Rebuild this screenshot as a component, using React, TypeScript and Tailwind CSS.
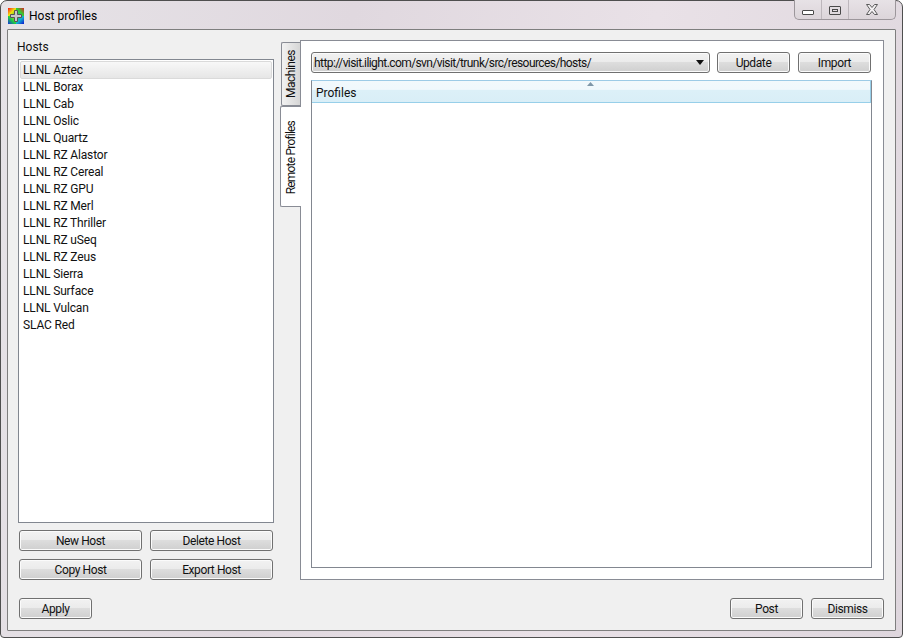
const hosts = ["LLNL Aztec","LLNL Borax","LLNL Cab","LLNL Oslic","LLNL Quartz","LLNL RZ Alastor","LLNL RZ Cereal","LLNL RZ GPU","LLNL RZ Merl","LLNL RZ Thriller","LLNL RZ uSeq","LLNL RZ Zeus","LLNL Sierra","LLNL Surface","LLNL Vulcan","SLAC Red"];

function Btn({ label, w }: { label: string; w: string }) {
  return (
    <button className={`${w} h-[21px] shrink-0 rounded-[3px] border border-[#707070] bg-[linear-gradient(#f2f2f2_0%,#ebebeb_48%,#dddddd_50%,#cfcfcf_100%)] text-[12px] leading-[18px] tracking-[-0.4px] text-[#111] shadow-[inset_0_0_0_1px_#fbfbfb]`}>
      {label}
    </button>
  );
}

function Logo() {
  return (
    <svg width="16" height="16" viewBox="0 0 16 16" className="shrink-0">
      <defs>
        <linearGradient id="q1" x1="0" y1="0" x2="1" y2="1">
          <stop offset="0" stopColor="#ff1010" />
          <stop offset="0.5" stopColor="#f0e010" />
          <stop offset="1" stopColor="#10d020" />
        </linearGradient>
        <linearGradient id="q2" x1="0" y1="1" x2="1" y2="0">
          <stop offset="0" stopColor="#20c0a0" />
          <stop offset="0.5" stopColor="#30d030" />
          <stop offset="1" stopColor="#e02020" />
        </linearGradient>
        <linearGradient id="q3" x1="1" y1="0" x2="0" y2="1">
          <stop offset="0" stopColor="#f0e010" />
          <stop offset="0.5" stopColor="#20d040" />
          <stop offset="1" stopColor="#1030e0" />
        </linearGradient>
        <linearGradient id="q4" x1="0" y1="0" x2="1" y2="1">
          <stop offset="0" stopColor="#20d040" />
          <stop offset="0.5" stopColor="#10b0d0" />
          <stop offset="1" stopColor="#1010d0" />
        </linearGradient>
      </defs>
      <rect x="0" y="0" width="8" height="8" fill="url(#q1)" />
      <rect x="8" y="0" width="8" height="8" fill="url(#q2)" />
      <rect x="0" y="8" width="8" height="8" fill="url(#q3)" />
      <rect x="8" y="8" width="8" height="8" fill="url(#q4)" />
      <path d="M6.500 2.500h3v4h4v3h-4v4h-3v-4h-4v-3h4z" fill="#c8c8c8" stroke="#555" strokeWidth="1" />
    </svg>
  );
}

export default function App() {
  return (
    <div className="w-[903px] h-[638px] overflow-hidden bg-white font-['Roboto',sans-serif] text-[12px] text-[#111]">
      <div className="w-full h-full flex flex-col rounded-t-[7px] rounded-b-[4px] border border-[#4f4f4f] bg-[linear-gradient(100deg,#e6e3e7_0%,#e0d8df_35%,#e9e1e7_65%,#ded6dd_100%)] px-[6px] pb-[6px]">
        <div className="h-[28px] flex items-start shrink-0">
          <div className="flex items-center gap-[5px] pl-[1px] pt-[7px]">
            <Logo />
            <span className="text-[12px] leading-[16px] text-[#000]">Host profiles</span>
          </div>
          <div className="ml-auto -mt-[1px] flex h-[20px] w-[102px] rounded-b-[5px] border border-t-0 border-[#9c969b] bg-[linear-gradient(#e7e2e6,#dcd5da)]">
            <div className="w-[27px] border-r border-[#bdb7bc] flex items-end justify-center pb-[4px]">
              <div className="w-[12px] h-[5px] rounded-[1px] border border-[#4a4a4a] bg-white" />
            </div>
            <div className="w-[27px] border-r border-[#bdb7bc] flex items-center justify-center pt-[1px]">
              <div className="w-[12px] h-[9px] rounded-[1px] border border-[#4a4a4a] flex items-center justify-center">
                <div className="w-[6px] h-[3px] border border-[#4a4a4a]" />
              </div>
            </div>
            <div className="flex-1 flex items-center justify-center pr-[1px]">
              <svg width="12" height="11" viewBox="0 0 12 11">
                <path d="M.5.500h3L6 3.500 8.500.500h3L8 5.500l3.500 5h-3L6 7.500l-2.500 3h-3L4 5.500z" fill="#f4f1f3" stroke="#5a5a5a" strokeWidth="1" />
              </svg>
            </div>
          </div>
        </div>
        <div className="flex-1 min-h-0 flex flex-col rounded-[1px] border border-[#7e7e7e] bg-[#f0f0f0] pt-[10px] pl-[10px] pr-[11px] pb-[11px]">
          <div className="flex flex-1 min-h-0">
            <div className="w-[256px] shrink-0 flex flex-col">
              <div className="h-[19px] leading-[14px] -ml-[1px]">Hosts</div>
              <div className="h-[465px] border border-[#828790] bg-white p-[1px] tracking-[-0.15px]">
                {hosts.map((h, i) => (
                  <div key={h} className={i === 0 ? "h-[18px] pl-[2px] leading-[16px] rounded-[2px] border border-[#dadada] bg-[linear-gradient(#f8f8f8,#e6e6e6)]" : "h-[17px] pl-[3px] leading-[17px]"}>{h}</div>
                ))}
              </div>
              <div className="flex gap-[8px] mt-[7px] pl-[1px]">
                <Btn label="New Host" w="w-[123px]" />
                <Btn label="Delete Host" w="w-[123px]" />
              </div>
              <div className="flex gap-[8px] mt-[8px] pl-[1px]">
                <Btn label="Copy Host" w="w-[123px]" />
                <Btn label="Export Host" w="w-[123px]" />
              </div>
            </div>
            <div className="w-[26px] shrink-0 flex flex-col items-end pl-[6px] pt-[2px]">
              <div className="w-[19px] h-[64px] rounded-l-[2px] border border-r-0 border-[#898c95] bg-[linear-gradient(90deg,#f2f2f2,#d6d6d6)] flex items-center justify-center">
                <span className="[writing-mode:vertical-rl] rotate-180 leading-[17px] text-[12px] tracking-[-0.5px]">Machines</span>
              </div>
              <div className="relative z-10 -mr-[1px] w-[21px] h-[101px] rounded-l-[2px] border border-r-0 border-[#898c95] bg-white flex items-center justify-center pt-[3px]">
                <span className="[writing-mode:vertical-rl] rotate-180 leading-[17px] text-[12px] tracking-[-0.8px]">Remote Profiles</span>
              </div>
            </div>
            <div className="flex-1 min-w-0 flex flex-col border border-[#898c95] bg-white pt-[11px] pl-[10px] pr-[11px] pb-[11px]">
              <div className="flex shrink-0 items-start gap-[7px]">
                <div className="w-[399px] h-[21px] flex items-center rounded-[3px] border border-[#707070] bg-[linear-gradient(#f2f2f2_0%,#ebebeb_48%,#dddddd_50%,#cfcfcf_100%)] pl-[2px] pr-[4px] shadow-[inset_0_0_0_1px_#fbfbfb]">
                  <span className="flex-1 leading-[18px] tracking-[-0.58px]">http://visit.ilight.com/svn/visit/trunk/src/resources/hosts/</span>
                  <svg width="8" height="5" viewBox="0 0 8 5" className="mr-[1px]"><path d="M0 0h8L4 5z" fill="#111" /></svg>
                </div>
                <Btn label="Update" w="w-[73px]" />
                <div className="ml-[1px]"><Btn label="Import" w="w-[73px]" /></div>
              </div>
              <div className="mt-[7px] flex-1 min-h-0 flex flex-col border border-[#828790] border-t-[#9ccbe6]">
                <div className="relative h-[22px] shrink-0 border-b border-r border-[#97cfe9] bg-[linear-gradient(#f2f9fc_0%,#eff8fc_40%,#dcf0f8_45%,#d9eef7_100%)] pl-[4px] leading-[25px]">
                  Profiles
                  <svg width="7" height="4" viewBox="0 0 7 4" className="absolute top-[1px] left-[275px]"><path d="M0 4L3.500 0 7 4z" fill="#7f97a8" /></svg>
                </div>
                <div className="flex-1 bg-white" />
              </div>
            </div>
          </div>
          <div className="flex shrink-0 pl-[1px] mt-[18px]">
            <Btn label="Apply" w="w-[73px]" />
            <div className="ml-auto flex gap-[8px]">
              <Btn label="Post" w="w-[73px]" />
              <Btn label="Dismiss" w="w-[73px]" />
            </div>
          </div>
        </div>
      </div>
    </div>
  );
}
